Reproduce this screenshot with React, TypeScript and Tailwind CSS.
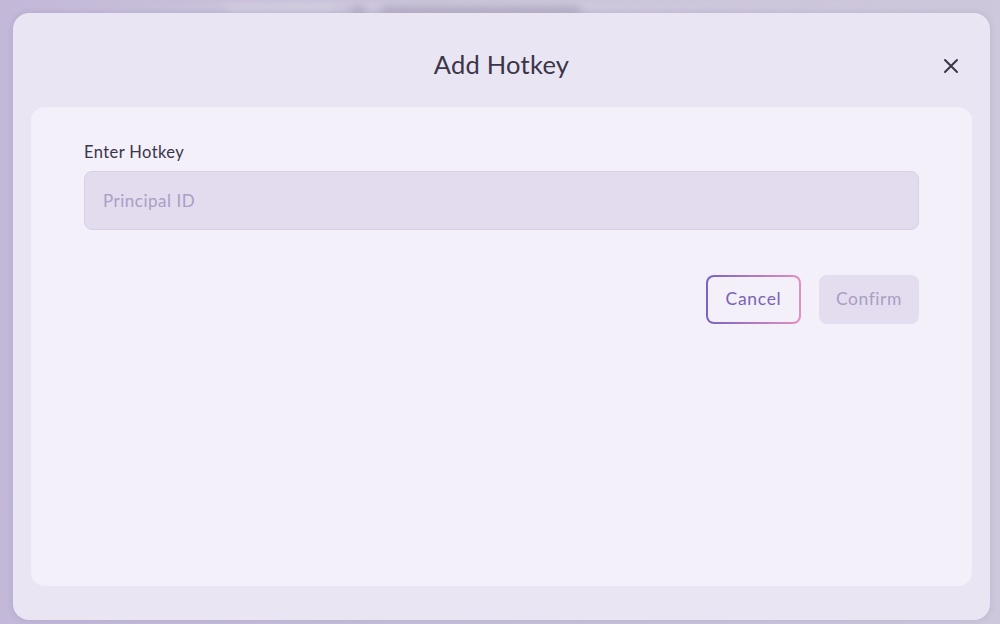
import React from "react";

export default function App() {
  return (
    <div className="relative h-[624px] w-[1000px] overflow-hidden bg-gradient-to-r from-[#c3b8d8] to-[#cec8dc] font-['Lato',sans-serif]">
      {/* blurred page behind the dialog */}
      <div className="flex h-[13px] items-end gap-4 bg-gradient-to-r from-transparent via-[#d0cbdd] to-transparent pl-[225px] blur-[4px]">
        <div className="h-[8px] w-[110px] rounded bg-[#d4d0e0]" />
        <div className="h-[6px] w-[14px] rounded bg-[#aaa4ba]" />
        <div className="h-[6px] w-[200px] rounded bg-[#aaa4ba]" />
      </div>

      {/* dialog */}
      <div className="absolute left-[13px] top-[13px] flex h-[607px] w-[977px] flex-col rounded-[16px] bg-[#e9e5f3] shadow-[0_0_6px_rgba(90,70,130,0.15)]">
        <div className="relative flex h-[94px] items-center justify-center">
          <h2 className="mt-[8px] text-[25.5px] tracking-[0.01em] text-[#3a3549]">Add Hotkey</h2>
          <button className="absolute right-[31px] top-[45px] text-[#3a3549]">
            <svg width="16" height="16" viewBox="0 0 16 16" fill="none" stroke="currentColor" strokeWidth="2" strokeLinecap="round">
              <path d="M2 2L14 14M14 2L2 14" />
            </svg>
          </button>
        </div>
        <div className="mx-[18px] mb-[34px] flex-1 rounded-[14px] bg-[#f3f0fa] px-[53px] pt-[33px]">
          <label className="block text-[16.5px] tracking-[0.025em] text-[#3a3549]">Enter Hotkey</label>
          <input
            type="text"
            placeholder="Principal ID"
            className="mt-[6px] h-[59px] w-full rounded-[8px] border border-[#d8d0e8] bg-[#e2dcee] px-[18px] text-[17px] tracking-[0.03em] text-[#3a3549] outline-none placeholder:text-[#aa9ec6]"
          />
          <div className="mt-[45px] flex justify-end gap-[18px]">
            <div className="rounded-[8px] bg-gradient-to-r from-[#7a62c2] to-[#e38fc0] p-[2px]">
              <button className="h-[45px] w-[91px] rounded-[6px] bg-[#f3f0fa] text-[17.5px] tracking-[0.04em] text-[#7a62b5]">
                Cancel
              </button>
            </div>
            <button className="h-[49px] w-[100px] rounded-[8px] bg-[#e4ddef] text-[17.5px] tracking-[0.03em] text-[#a99ec2]">
              Confirm
            </button>
          </div>
        </div>
      </div>
    </div>
  );
}
